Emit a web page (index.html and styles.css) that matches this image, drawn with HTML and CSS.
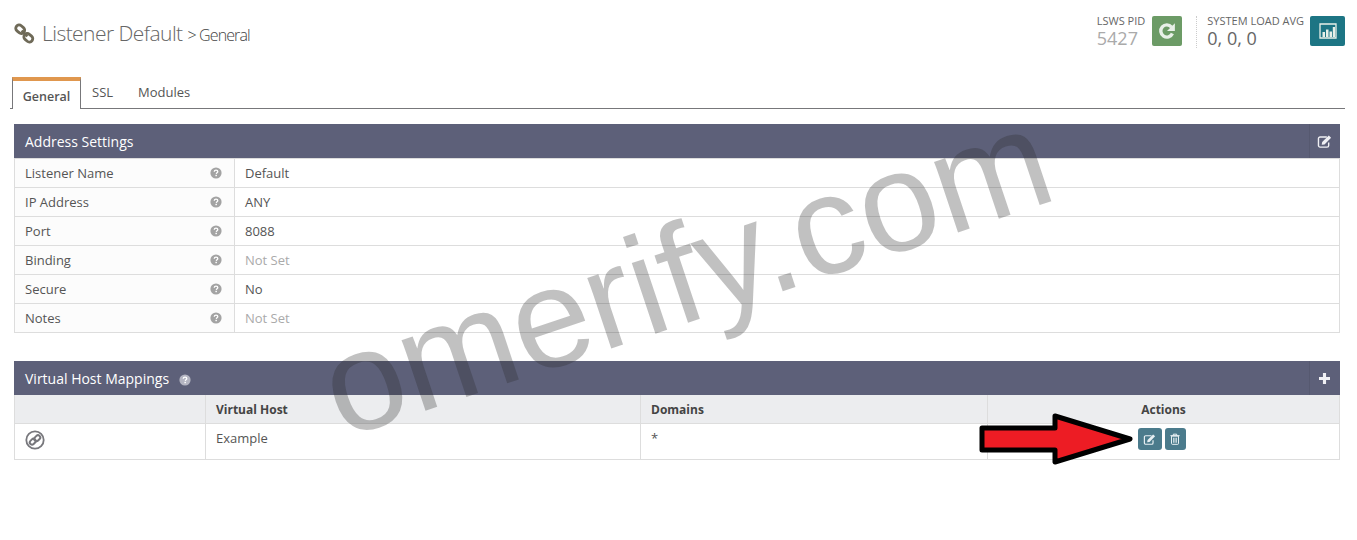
FILE: index.html
```html
<!DOCTYPE html>
<html lang="en">
<head>
  <meta charset="UTF-8">
  <title>Listener Default</title>
  <link rel="stylesheet" href="styles.css">
</head>
<body>
  <svg class="defs" width="0" height="0">
    <symbol id="i-help" viewBox="0 0 12 12">
      <circle cx="6" cy="6" r="5.6" fill="currentColor"/>
      <path d="M4.200 4.700C4.300 3.700 5 3.200 6 3.200c1.100 0 1.800.6 1.800 1.400 0 1.200-1.400 1.200-1.500 2.300" fill="none" stroke="#fff" stroke-width="1.300"/>
      <rect x="5.400" y="7.800" width="1.500" height="1.400" fill="#fff"/>
    </symbol>
    <symbol id="i-edit" viewBox="0 0 16 14">
      <path d="M10.500 2.200H3.200A1.700 1.700 0 0 0 1.500 3.900v7.400A1.700 1.700 0 0 0 3.200 13h7.600a1.700 1.700 0 0 0 1.700-1.700V8" fill="none" stroke="currentColor" stroke-width="1.500"/>
      <path d="M5.500 7.600 12.600.5l2.500 2.500-7.100 7.100-3 .5z" fill="currentColor"/>
    </symbol>
    <symbol id="i-trash" viewBox="0 0 12 14">
      <path d="M.5 3h11M4 3V1.200h4V3" fill="none" stroke="currentColor" stroke-width="1.200"/>
      <path d="M1.800 3.500v9c0 .5.400.9.900.9h6.600c.5 0 .9-.4.900-.9v-9z" fill="none" stroke="currentColor" stroke-width="1.200"/>
      <path d="M4.300 5.500v6M6 5.500v6M7.700 5.500v6" stroke="currentColor" stroke-width="1"/>
    </symbol>
  </svg>

  <header class="page-head">
    <h1 class="page-title">
      <svg class="title-icon" viewBox="0 0 22 22" width="21" height="21">
        <g fill="none" stroke="#6f6a58" stroke-width="3">
          <rect x="1.500" y="3" width="10" height="7" rx="3.500" transform="rotate(40 6.500 6.500)"/>
          <rect x="10" y="12" width="10" height="7" rx="3.500" transform="rotate(40 15 15.500)"/>
        </g>
        <path d="M8 8l6 6" stroke="#6f6a58" stroke-width="2.500"/>
      </svg>
      <span class="title-main">Listener Default</span>
      <span class="title-sub">&gt; General</span>
    </h1>
    <div class="stats">
      <div class="stat">
        <div class="stat-label">LSWS PID</div>
        <div class="stat-value stat-pid">5427</div>
      </div>
      <button class="square-btn btn-green" type="button">
        <svg viewBox="0 0 16 16" width="18" height="18">
          <path d="M12.800 10.200A5.400 5.400 0 1 1 12 4.500" fill="none" stroke="currentColor" stroke-width="3"/>
          <path d="M15 1v7H8z" fill="currentColor"/>
        </svg>
      </button>
      <div class="stat stat-load">
        <div class="stat-label">SYSTEM LOAD AVG</div>
        <div class="stat-value">0, 0, 0</div>
      </div>
      <button class="square-btn btn-teal" type="button">
        <svg viewBox="0 0 18 16" width="18" height="16">
          <path d="M1 1h16v14H1z" fill="none" stroke="currentColor" stroke-width="1.300"/>
          <path d="M3.500 9h2.500v5H3.500zM7 6.500h2.500V14H7zM10.500 8.500H13V14h-2.500zM13.800 4H16v10h-2.200z" fill="currentColor"/>
        </svg>
      </button>
    </div>
  </header>

  <nav class="tabs">
    <a class="tab tab-active">General</a>
    <a class="tab">SSL</a>
    <a class="tab">Modules</a>
  </nav>

  <section class="panel panel-address">
    <div class="panel-head">
      <span>Address Settings</span>
      <span class="panel-action"><svg width="15" height="13"><use href="#i-edit"/></svg></span>
    </div>
    <div class="rows">
      <div class="row"><div class="row-label">Listener Name<svg class="help" width="12" height="12"><use href="#i-help"/></svg></div><div class="row-value">Default</div></div>
      <div class="row"><div class="row-label">IP Address<svg class="help" width="12" height="12"><use href="#i-help"/></svg></div><div class="row-value">ANY</div></div>
      <div class="row"><div class="row-label">Port<svg class="help" width="12" height="12"><use href="#i-help"/></svg></div><div class="row-value">8088</div></div>
      <div class="row"><div class="row-label">Binding<svg class="help" width="12" height="12"><use href="#i-help"/></svg></div><div class="row-value not-set">Not Set</div></div>
      <div class="row"><div class="row-label">Secure<svg class="help" width="12" height="12"><use href="#i-help"/></svg></div><div class="row-value">No</div></div>
      <div class="row"><div class="row-label">Notes<svg class="help" width="12" height="12"><use href="#i-help"/></svg></div><div class="row-value not-set">Not Set</div></div>
    </div>
  </section>

  <section class="panel">
    <div class="panel-head">
      <span>Virtual Host Mappings<svg class="help help-head" width="12" height="12"><use href="#i-help"/></svg></span>
      <span class="panel-action">
        <svg viewBox="0 0 12 12" width="11" height="11"><path d="M4.300 0h3.400v4.300H12v3.400H7.700V12H4.300V7.700H0V4.300h4.300z" fill="currentColor"/></svg>
      </span>
    </div>
    <table class="map-table">
      <thead>
        <tr>
          <th class="col-icon"></th>
          <th class="col-host">Virtual Host</th>
          <th class="col-domains">Domains</th>
          <th class="col-actions">Actions</th>
        </tr>
      </thead>
      <tbody>
        <tr>
          <td class="link-cell">
            <svg viewBox="0 0 20 20" width="20" height="20">
              <circle cx="10" cy="10" r="8.700" fill="none" stroke="#77777c" stroke-width="1.800"/>
              <g fill="none" stroke="#77777c" stroke-width="2">
                <rect x="4.500" y="9.500" width="6.500" height="4.500" rx="2.200" transform="rotate(-45 7.700 11.700)"/>
                <rect x="9" y="6" width="6.500" height="4.500" rx="2.200" transform="rotate(-45 12.200 8.200)"/>
              </g>
            </svg>
          </td>
          <td>Example</td>
          <td>*</td>
          <td class="actions-cell">
            <div class="act-group">
              <button class="act-btn act-edit" type="button"><svg width="13" height="11"><use href="#i-edit"/></svg></button>
              <button class="act-btn act-del" type="button"><svg width="10" height="12"><use href="#i-trash"/></svg></button>
            </div>
          </td>
        </tr>
      </tbody>
    </table>
  </section>

  <div class="watermark">omerify.com</div>

  <svg class="arrow" width="158" height="54" viewBox="0 0 158 54">
    <path d="M4 16H77V4L152 27 77 50V38H4z" fill="#ed1c24" stroke="#000" stroke-width="5" stroke-linejoin="round"/>
  </svg>
</body>
</html>
```

FILE: styles.css
```css
* {
  box-sizing: border-box;
}

body {
  margin: 0;
  padding: 0 12px 0 10px;
  background-color: #fff;
  color: #555;
  font-family: "Open Sans", sans-serif;
  font-size: 13px;
  overflow: hidden;
}

.defs {
  display: block;
}

/* Header */
.page-head {
  display: flex;
  justify-content: space-between;
  height: 77px;
  padding: 13px 0 0 4px;
}

.page-title {
  display: flex;
  align-items: baseline;
  margin: 6px 0 0;
  font-weight: 300;
  color: #666;
}

.title-icon {
  align-self: flex-start;
  margin: 4px 7px 0 0;
}

.title-main {
  font-size: 21px;
  letter-spacing: -0.55px;
}

.title-sub {
  margin-left: 5px;
  font-size: 16px;
  font-weight: 300;
  letter-spacing: -0.9px;
  color: #444;
}

.stats {
  display: flex;
  align-items: flex-start;
  margin-top: 1px;
}

.stat-label {
  font-size: 11px;
  line-height: 13px;
  color: #666;
}

.stat-value {
  font-size: 18px;
  line-height: 22px;
  color: #666;
}

.stat-pid {
  color: #aaa;
}

.stat-load {
  margin-left: 14px;
  padding-left: 10px;
  height: 32px;
  margin-top: 2px;
  border-left: 1px dotted #ccc;
}

.stat-load .stat-label {
  margin-top: -2px;
}

.square-btn {
  display: flex;
  align-items: center;
  justify-content: center;
  width: 30px;
  height: 30px;
  margin: 2px 0 0 7px;
  padding: 0;
  border: none;
  border-radius: 2px;
  color: #e8f0e8;
}

.btn-green {
  background-color: #6c9b66;
}

.btn-teal {
  width: 35px;
  margin-left: 6px;
  background-color: #1d7584;
}

/* Tabs */
.tabs {
  display: flex;
  height: 32px;
  padding-left: 2px;
  border-bottom: 1px solid #77777a;
}

.tab {
  padding: 6px 14px 0 11px;
  color: #555;
}

.tab-active {
  width: 69px;
  height: 32px;
  padding: 7px 0 0;
  text-align: center;
  font-weight: 600;
  font-size: 12.500px;
  background-color: #fff;
  border: 1px solid #77777a;
  border-top: 4px solid #e0974e;
  border-bottom: none;
}

/* Panels */
.panel {
  margin: 15px 5px 0 4px;
}

.panel-address {
  margin-bottom: 28px;
}

.panel-head {
  display: flex;
  align-items: center;
  justify-content: space-between;
  height: 34px;
  padding-left: 11px;
  background-color: #5d6079;
  color: #fff;
  font-size: 14px;
}

.panel-action {
  display: flex;
  align-items: center;
  justify-content: center;
  width: 31px;
  height: 34px;
  padding-right: 2px;
  border-left: 1px solid #565970;
  color: #f0f0f4;
}

.help {
  color: #a3a3a3;
}

.help-head {
  margin-left: 10px;
  vertical-align: -2px;
  color: #b4b5c2;
}

.rows {
  border: 1px solid #ddd;
  border-bottom: none;
}

.row {
  display: flex;
  height: 29px;
  border-bottom: 1px solid #ddd;
}

.row-label {
  display: flex;
  align-items: center;
  justify-content: space-between;
  width: 220px;
  padding: 0 12px 0 10px;
  background-color: #fcfcfc;
  border-right: 1px solid #ddd;
}

.row-value {
  display: flex;
  align-items: center;
  padding-left: 10px;
}

.not-set {
  color: #aaa;
}

/* Mapping table */
.map-table {
  width: 100%;
  border-collapse: collapse;
  table-layout: fixed;
}

.map-table th,
.map-table td {
  padding: 0 10px;
  border: 1px solid #ddd;
  text-align: left;
}

.map-table th {
  height: 28px;
  padding-top: 2px;
  background-color: #ecedef;
  color: #444;
  font-size: 12px;
  font-weight: 700;
  border-top: none;
}

.map-table td {
  height: 36px;
  padding-bottom: 6px;
}

.col-icon {
  width: 191px;
}

.col-host {
  width: 435px;
}

.col-domains {
  width: 347px;
}

.map-table .col-actions {
  text-align: center;
}

.map-table .link-cell {
  padding: 0 0 2px 10px;
}

.link-cell svg {
  display: block;
}

.map-table .actions-cell {
  padding: 0 4px 4px 0;
}

.act-group {
  display: flex;
  justify-content: center;
  gap: 3px;
}

.act-btn {
  display: flex;
  align-items: center;
  justify-content: center;
  height: 22px;
  padding: 0;
  border: none;
  border-radius: 3px;
  background-color: #4b7b8c;
  color: #e8f0f3;
}

.act-edit {
  width: 24px;
}

.act-del {
  width: 21px;
}

/* Overlays from the screenshot */
.watermark {
  position: absolute;
  left: 307px;
  top: 202px;
  font-family: "Liberation Sans", Arial, sans-serif;
  font-size: 141px;
  line-height: 1;
  color: rgba(40, 40, 40, 0.29);
  transform: rotate(-18.5deg);
  white-space: nowrap;
  pointer-events: none;
}

.arrow {
  position: absolute;
  left: 978px;
  top: 412px;
}
```
